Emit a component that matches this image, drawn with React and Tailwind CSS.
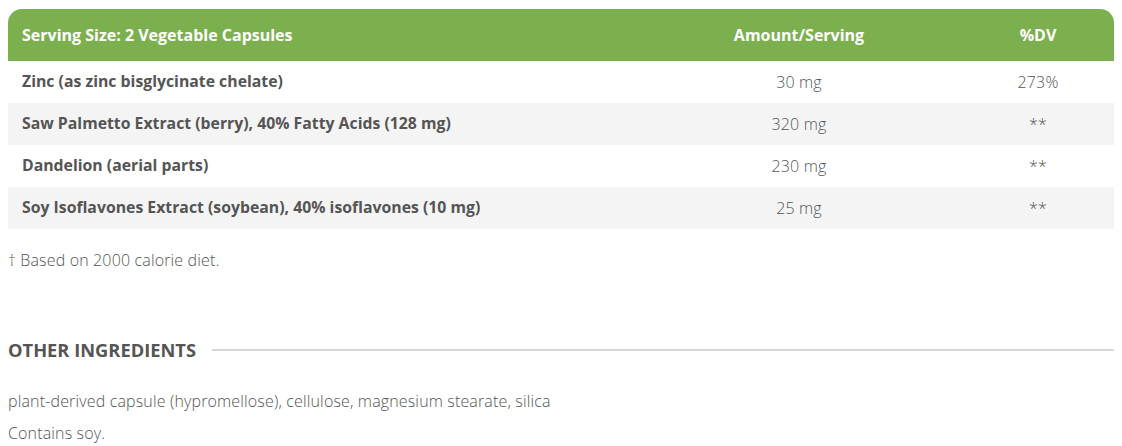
export default function App() {
  const rows = [
    { name: 'Zinc (as zinc bisglycinate chelate)', amount: '30 mg', dv: '273%' },
    { name: 'Saw Palmetto Extract (berry), 40% Fatty Acids (128 mg)', amount: '320 mg', dv: '**' },
    { name: 'Dandelion (aerial parts)', amount: '230 mg', dv: '**' },
    { name: 'Soy Isoflavones Extract (soybean), 40% isoflavones (10 mg)', amount: '25 mg', dv: '**' }
  ];

  return (
    <div className="w-[1122px] h-[446px] bg-white pl-2 pr-2 pt-[9px] text-[#555] overflow-hidden" style={{ fontFamily: '"Open Sans", Lato, sans-serif' }}>
      <div className="w-[1106px]">
        {/* Supplement facts table */}
        <div className="flex h-[52px] items-center bg-[#7cb04f] rounded-t-[14px] text-white font-bold text-[16px]">
          <div className="w-[628px] pl-[14px]">Serving Size: 2 Vegetable Capsules</div>
          <div className="w-[326px] text-center">Amount/Serving</div>
          <div className="w-[152px] text-center">%DV</div>
        </div>
        {rows.map((row, i) => (
          <div key={i} className={`flex h-[42px] items-center ${i % 2 === 1 ? 'bg-[#f4f4f4]' : 'bg-white'}`}>
            <div className="w-[628px] pl-[14px] font-bold text-[15.8px]">{row.name}</div>
            <div className="w-[326px] text-center font-light text-[16px] tracking-[0.15px]">{row.amount}</div>
            <div className="w-[152px] text-center font-light text-[16px] tracking-[0.15px]">{row.dv}</div>
          </div>
        ))}

        <p className="mt-[20px] text-[16px] tracking-[0.15px] leading-[22px] font-light">† Based on 2000 calorie diet.</p>

        {/* Other ingredients */}
        <div className="mt-[67px] flex items-center gap-[16px] h-[24px]">
          <h3 className="text-[18.3px] leading-[24px] font-bold uppercase whitespace-nowrap">Other Ingredients</h3>
          <div className="flex-1 h-[2px] bg-[#d6d6d6]"></div>
        </div>
        <p className="mt-[28px] text-[16px] tracking-[0.15px] leading-[22px] font-light">plant-derived capsule (hypromellose), cellulose, magnesium stearate, silica</p>
        <p className="mt-[10px] text-[16px] tracking-[0.15px] leading-[22px] font-light">Contains soy.</p>
      </div>
    </div>
  );
}
